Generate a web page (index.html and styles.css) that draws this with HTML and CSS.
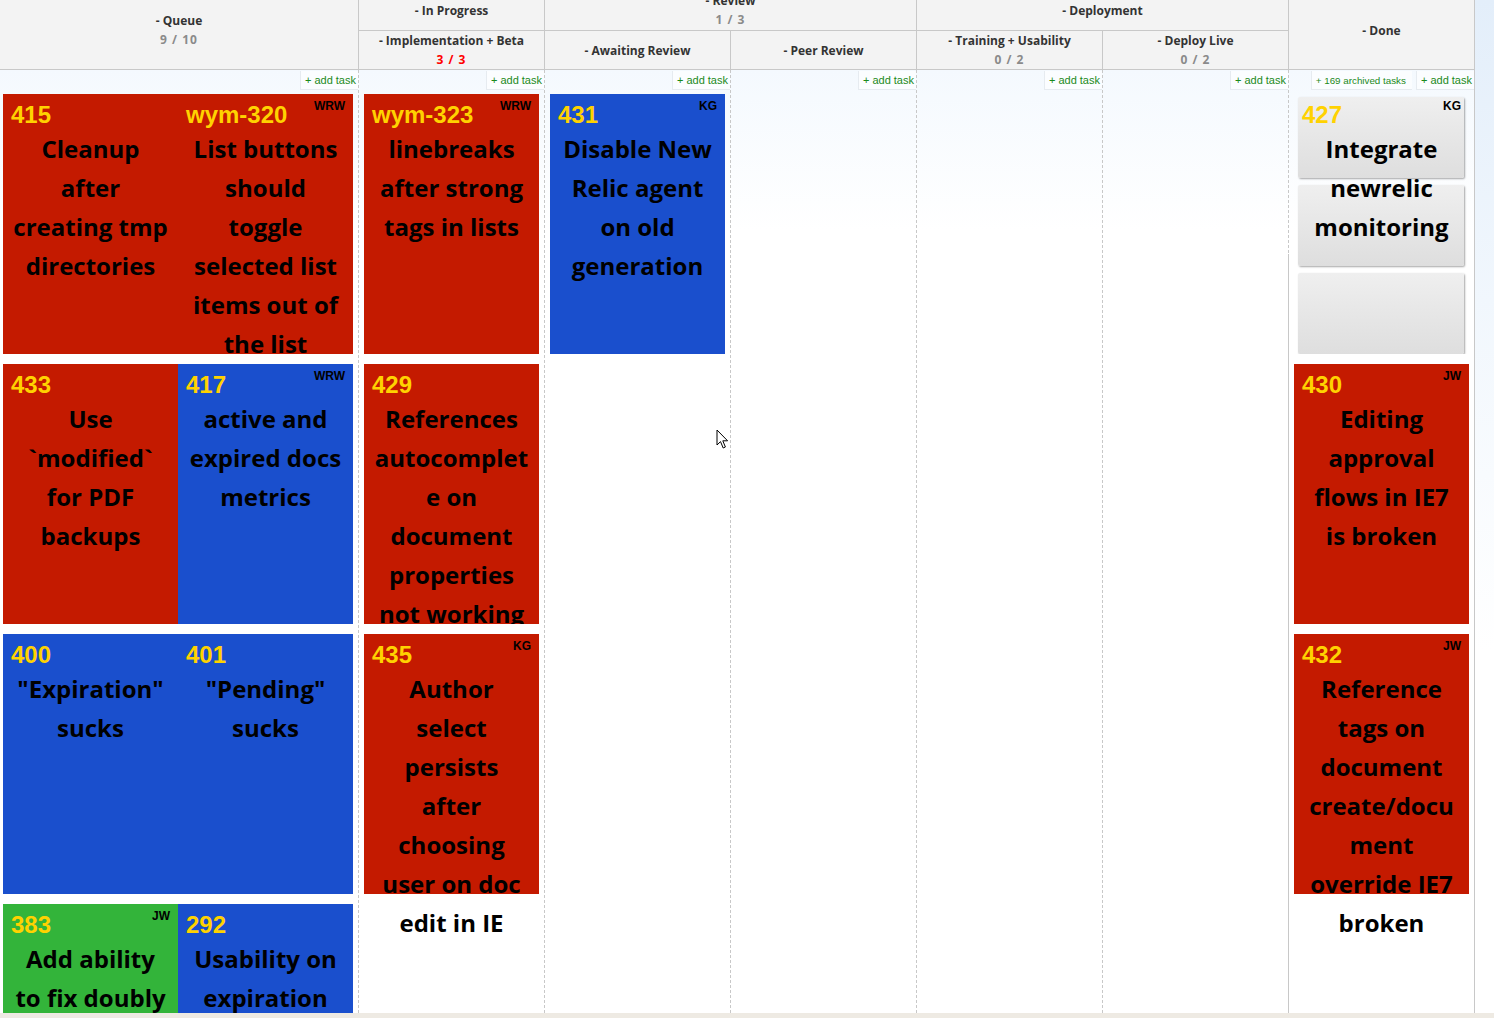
FILE: index.html
```html
<!DOCTYPE html>
<html lang="en">
<head>
<meta charset="utf-8">
<title>Kanban board</title>
<link rel="stylesheet" href="styles.css">
</head>
<body>
<div class="page">
  <div class="header">
    <div class="hcell span-both c-queue"><div class="htitle">- Queue</div><div class="hcount">9 / 10</div></div>
    <div class="hcell top c-prog"><div class="htitle">- In Progress</div></div>
    <div class="hcell top c-review"><div class="htitle">- Review</div><div class="hcount">1 / 3</div></div>
    <div class="hcell top c-deploy"><div class="htitle">- Deployment</div></div>
    <div class="hcell span-both c-done"><div class="htitle">- Done</div></div>
    <div class="hcell sub c-impl"><div class="htitle">- Implementation + Beta</div><div class="hcount over">3 / 3</div></div>
    <div class="hcell sub c-await"><div class="htitle">- Awaiting Review</div></div>
    <div class="hcell sub c-peer"><div class="htitle">- Peer Review</div></div>
    <div class="hcell sub c-train"><div class="htitle">- Training + Usability</div><div class="hcount">0 / 2</div></div>
    <div class="hcell sub c-live"><div class="htitle">- Deploy Live</div><div class="hcount">0 / 2</div></div>
  </div>

  <div class="board">
    <div class="col col-queue">
      <div class="bar"><span class="btn">+ add task</span></div>
      <div class="cards">
        <div class="card red"><div class="num">415</div><div class="title">Cleanup after creating tmp directories</div></div>
        <div class="card red"><div class="num">wym-320</div><div class="who">WRW</div><div class="title">List buttons should toggle selected list items out of the list</div></div>
        <div class="card red"><div class="num">433</div><div class="title">Use `modified` for PDF backups</div></div>
        <div class="card blue"><div class="num">417</div><div class="who">WRW</div><div class="title">active and expired docs metrics</div></div>
        <div class="card blue"><div class="num">400</div><div class="title">"Expiration" sucks</div></div>
        <div class="card blue"><div class="num">401</div><div class="title">"Pending" sucks</div></div>
        <div class="card green"><div class="num">383</div><div class="who">JW</div><div class="title">Add ability to fix doubly</div></div>
        <div class="card blue"><div class="num">292</div><div class="title">Usability on expiration</div></div>
      </div>
    </div>
    <div class="col">
      <div class="bar"><span class="btn">+ add task</span></div>
      <div class="cards">
        <div class="card red"><div class="num">wym-323</div><div class="who">WRW</div><div class="title">linebreaks after strong tags in lists</div></div>
        <div class="card red"><div class="num">429</div><div class="title">References autocomplete on document properties not working</div></div>
        <div class="card red"><div class="num">435</div><div class="who">KG</div><div class="title">Author select persists after choosing user on doc edit in IE</div></div>
      </div>
    </div>
    <div class="col">
      <div class="bar"><span class="btn">+ add task</span></div>
      <div class="cards">
        <div class="card blue"><div class="num">431</div><div class="who">KG</div><div class="title">Disable New Relic agent on old generation</div></div>
      </div>
    </div>
    <div class="col">
      <div class="bar"><span class="btn">+ add task</span></div>
      <div class="cards"></div>
    </div>
    <div class="col">
      <div class="bar"><span class="btn">+ add task</span></div>
      <div class="cards"></div>
    </div>
    <div class="col">
      <div class="bar"><span class="btn">+ add task</span></div>
      <div class="cards"></div>
    </div>
    <div class="col col-done">
      <div class="bar"><span class="btn small">+ 169 archived tasks</span><span class="btn">+ add task</span></div>
      <div class="cards">
        <div class="card grey">
          <div class="stack"><div class="sheet"></div><div class="sheet"></div><div class="sheet"></div></div>
          <div class="num">427</div><div class="who">KG</div><div class="title">Integrate newrelic monitoring</div>
        </div>
        <div class="card red"><div class="num">430</div><div class="who">JW</div><div class="title">Editing approval flows in IE7 is broken</div></div>
        <div class="card red"><div class="num">432</div><div class="who">JW</div><div class="title">Reference tags on document create/&#8288;document override IE7 broken</div></div>
      </div>
    </div>
  </div>

  <svg class="cursor" width="13" height="21" viewBox="0 0 13 21" aria-hidden="true">
    <path d="M1 1 L1 16 L4.5 12.6 L7.2 19 L9.4 18 L6.8 11.8 L11.6 11.8 Z" fill="#fff" stroke="#000" stroke-width="1" stroke-linejoin="round"/>
  </svg>
</div>
<div class="strip"></div>
</body>
</html>
```

FILE: styles.css
```css
html {
  background: linear-gradient(180deg, #e3eefa 0px, #f1f7fd 300px, #ffffff 650px);
}
body {
  margin: 0;
  font-family: "Open Sans", "Liberation Sans", sans-serif;
}
.page {
  position: relative;
  height: 1013px;
  overflow: hidden;
}
.strip {
  height: 5px;
  background: #eeeae3;
}

/* ---------- header ---------- */
.header {
  display: grid;
  grid-template-columns: 359px repeat(6, 186px);
  grid-template-rows: 31px 39px;
  width: 1475px;
  background: #f3f3f3;
}
.hcell {
  box-sizing: border-box;
  border-right: 1px solid #c8c8c8;
  border-bottom: 1px solid #c8c8c8;
  display: flex;
  flex-direction: column;
  justify-content: center;
  align-items: center;
  line-height: 19px;
  font-size: 12px;
  font-weight: 700;
  min-height: 0;
}
.hcell.top { padding-bottom: 10px; }
.hcell.span-both { padding-bottom: 9px; grid-row: 1 / 3; }
.c-queue { grid-column: 1; }
.c-prog { grid-column: 2; grid-row: 1; }
.c-review { grid-column: 3 / 5; grid-row: 1; }
.c-deploy { grid-column: 5 / 7; grid-row: 1; }
.c-done { grid-column: 7; }
.c-impl { grid-column: 2; grid-row: 2; }
.c-await { grid-column: 3; grid-row: 2; }
.c-peer { grid-column: 4; grid-row: 2; }
.c-train { grid-column: 5; grid-row: 2; }
.c-live { grid-column: 6; grid-row: 2; }
.htitle { color: #333; white-space: nowrap; }
.hcount { color: #8a8a8a; letter-spacing: 1px; white-space: nowrap; }
.hcount.over { color: #f00; }

/* ---------- board ---------- */
.board {
  display: flex;
  width: 1475px;
  height: 943px;
  background: linear-gradient(180deg, #f4f9fe 0px, #ffffff 160px);
}
.col {
  position: relative;
  box-sizing: border-box;
  width: 186px;
  flex: none;
  padding-left: 5px;
  border-right: 1px dashed #c8c8c8;
}
.col-queue { width: 359px; padding-left: 3px; }
.col-done { border-right: 1px solid #c8c8c8; }
.col-done::before {
  content: "";
  position: absolute;
  left: -1px;
  top: 184px;
  bottom: 0;
  width: 1px;
  background: #c8c8c8;
}
.bar {
  height: 20px;
  display: flex;
  justify-content: flex-end;
  align-items: flex-start;
  gap: 4px;
}
.btn {
  margin-top: 1px;
  padding: 3px 2px 2px 4px;
  font-family: "Liberation Sans", Arial, sans-serif;
  font-size: 11px;
  line-height: 13px;
  color: #1b8a1b;
  background: #fbfdff;
  border-left: 1px solid #e6ebf0;
  border-bottom: 1px solid #e6ebf0;
  white-space: nowrap;
}
.btn.small { font-size: 9.8px; padding-right: 6px; }
.cards {
  display: flex;
  flex-wrap: wrap;
  align-content: flex-start;
  padding-top: 4px;
}

/* ---------- cards ---------- */
.card {
  position: relative;
  box-sizing: border-box;
  width: 175px;
  height: 260px;
  margin-bottom: 10px;
  flex: none;
}
.card::after {
  content: "";
  position: absolute;
  left: 0;
  right: 0;
  top: 100%;
  height: 10px;
  background: #fff;
  z-index: 1;
}
.card.red { background: #c41a00; }
.card.blue { background: #1a4fcd; }
.card.green { background: #33b43a; }
.card.grey { background: transparent; }
.num {
  position: relative;
  padding: 6px 0 0 8px;
  height: 29px;
  line-height: 30px;
  font-family: "Liberation Sans", Arial, sans-serif;
  font-weight: 700;
  font-size: 24px;
  color: #ffd200;
}
.who {
  position: absolute;
  top: 5px;
  right: 8px;
  font-family: "Liberation Sans", Arial, sans-serif;
  font-weight: 700;
  font-size: 12px;
  line-height: 14px;
  color: #000;
}
.title {
  position: relative;
  padding: 0 9px;
  text-align: center;
  font-family: "Open Sans", sans-serif;
  font-weight: 700;
  font-size: 24px;
  line-height: 39px;
  color: #000;
  overflow-wrap: break-word;
}
.stack {
  position: absolute;
  inset: 0;
  padding: 3px 5px 0 4px;
  display: flex;
  flex-direction: column;
  gap: 7px;
}
.sheet {
  flex: 1;
  border-radius: 2px;
  background: linear-gradient(180deg, #efefef 0%, #dedede 100%);
  box-shadow: 1px 1px 2px rgba(0, 0, 0, 0.35);
}

/* ---------- mouse pointer ---------- */
.cursor {
  position: absolute;
  left: 716px;
  top: 429px;
  z-index: 5;
}
```
